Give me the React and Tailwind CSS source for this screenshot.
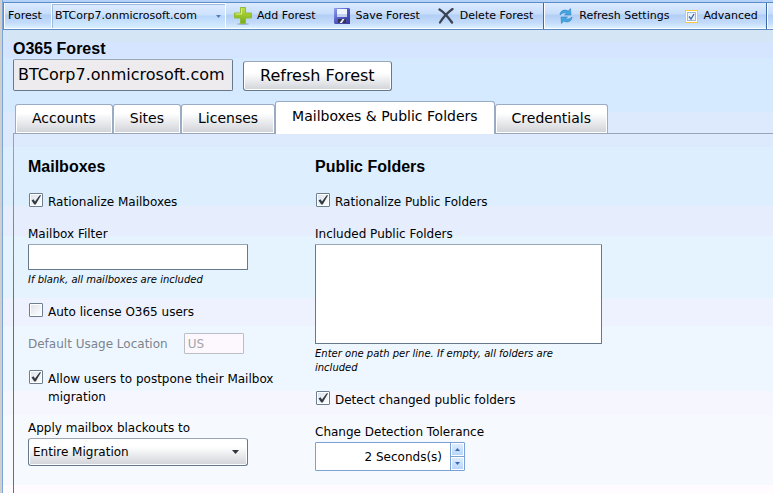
import React, { useState } from "react";

const AddIcon = () => (
  <svg width="18" height="18" viewBox="0 0 18 18">
    <defs>
      <linearGradient id="addFill" x1="0" y1="0" x2="0" y2="1">
        <stop offset="0" stopColor="#c3e046" />
        <stop offset="1" stopColor="#74ac12" />
      </linearGradient>
    </defs>
    <ellipse cx="9" cy="17" rx="6" ry="1" fill="#7f9cc0" opacity="0.6" />
    <path
      d="M6.500 .5h5v5.500h6v5h-6v5.500h-5v-5.500h-6v-5h6z"
      fill="url(#addFill)"
      stroke="#8fba3c"
      strokeWidth="1"
      strokeLinejoin="round"
    />
    <path d="M7.500 1.500v5.500h-6" fill="none" stroke="#dcef8c" strokeWidth="1" />
  </svg>
);

const SaveIcon = () => (
  <svg width="16" height="16" viewBox="0 0 16 16">
    <defs>
      <linearGradient id="saveFill" x1="0" y1="0" x2="1" y2="1">
        <stop offset="0" stopColor="#93a4ea" />
        <stop offset="0.5" stopColor="#5058c4" />
        <stop offset="1" stopColor="#3a3a98" />
      </linearGradient>
    </defs>
    <path d="M0 0h15l1 1v15H1l-1-1z" fill="url(#saveFill)" />
    <path d="M3 1h10v8H3z" fill="#eef3fd" />
    <path d="M3 6h10v3H3z" fill="#c5d2ee" />
    <path d="M4 11h8v4H4z" fill="#33364a" />
    <path d="M8.500 11h2L8 15H5.500z" fill="#e8ebf5" />
  </svg>
);

const DeleteIcon = () => (
  <svg width="16" height="16" viewBox="0 0 16 16">
    <path d="M1.500 1.500C6 4 10 9 14 14.500" fill="none" stroke="#3b4452" strokeWidth="2.400" strokeLinecap="round" />
    <path d="M14.500 1C9 5 5 9.500 2 14.500" fill="none" stroke="#3b4452" strokeWidth="2.200" strokeLinecap="round" />
  </svg>
);

const RefreshIcon = () => (
  <svg width="14" height="16" viewBox="0 0 14 16">
    <path
      d="M1 7C1 3.500 4 1.500 7.500 2.300L9.300 3L11.500 .5L12 7H5.500L7.500 5C5 4.500 3 5 1 7Z"
      fill="#45a4e0"
      stroke="#2c86c4"
      strokeWidth="0.6"
    />
    <path
      d="M13 9C13 12.500 10 14.500 6.500 13.700L4.700 13L2.500 15.500L2 9H8.500L6.500 11C9 11.500 11 11 13 9Z"
      fill="#45a4e0"
      stroke="#2c86c4"
      strokeWidth="0.6"
    />
  </svg>
);

const Triangle = ({ up, className }) => (
  <svg width="7" height="4" viewBox="0 0 7 4" className={className} fill="currentColor">
    <path d={up ? "M0 4h7L3.500 0z" : "M0 0h7L3.500 4z"} />
  </svg>
);

const ToolbarButton = ({ icon, children, className }) => (
  <button type="button" className={`flex shrink-0 items-center whitespace-nowrap ${className}`}>
    {icon}
    {children}
  </button>
);

const CheckBox = ({ label, defaultChecked }) => (
  <label className="mt-4 flex items-start gap-[5px] leading-[18px]">
    <span className="relative ml-px flex shrink-0">
      <input
        type="checkbox"
        defaultChecked={defaultChecked}
        className="peer size-[14px] appearance-none rounded-[1px] border border-[#6c7f90] bg-linear-to-br from-[#dce2ea] to-white shadow-[inset_0_0_0_1px_#ffffff]"
      />
      <svg
        viewBox="0 0 14 14"
        className="pointer-events-none absolute inset-0 hidden size-[14px] peer-checked:block"
      >
        <path d="M2.500 7.500L4.500 6.300L6 8.500L10.500 2.500L12.200 2L6.700 11.500H5.300Z" fill="#333b42" />
      </svg>
    </span>
    <span>{label}</span>
  </label>
);

const tabs = ["Accounts", "Sites", "Licenses", "Mailboxes & Public Folders", "Credentials"];

const App = () => {
  const [activeTab, setActiveTab] = useState("Mailboxes & Public Folders");

  return (
    <div className="flex min-h-screen border-l-2 border-[#d0cfcc] font-['DejaVu_Sans',Verdana,sans-serif] text-[12px] text-black">
      <div className="flex min-w-0 flex-1 flex-col border-l border-[#7ba3dc] bg-[linear-gradient(to_bottom,#d4e6f5_42px,#d5e5ff_42px,#d5e5ff_58px,#d5eaff_58px,#d5eaff_112px,#dde9fc_112px,#dde9fc_147px,#ddeeff_147px,#ddeeff_206px,#e6edfd_206px,#e6edfd_236px,#e5f3ff_236px,#e5f3ff_298px,#edf2fe_298px,#edf2fe_326px,#eef7ff_326px,#eef7ff_391px,#f6f6fe_391px,#f6f6fe_415px,#f6faff_415px,#f6faff_485px,#fffbff_485px)]">
        <div className="flex h-[30px] items-stretch overflow-hidden border-t-2 border-b border-t-[#b4d2f8] border-b-[#5c8cc4] text-[11px]">
          <div className="flex flex-1 items-stretch border-t border-l border-[#5c8cc4] bg-[linear-gradient(to_bottom,#dcebff_0px,#c6ddfb_11px,#b2cef5_12px,#c4dcfb_20px,#dcf0ff_25px)] shadow-[inset_1px_-1px_0_#ffffff]">
            <label htmlFor="forest" className="flex w-[47px] shrink-0 items-center pl-1">
              Forest
            </label>
            <div className="relative flex w-[175px] shrink-0 items-stretch border border-white bg-[linear-gradient(to_bottom,#ddebff_0px,#cce2ff_11px,#b9d7fb_12px,#d9f0ff_25px)] shadow-[inset_1px_1px_0_#9dbce0]">
              <select id="forest" className="w-full appearance-none pl-[3px]">
                <option>BTCorp7.onmicrosoft.com</option>
              </select>
              <Triangle className="pointer-events-none absolute top-[11px] right-1 h-[3px] w-[5px] text-[#5080bc]" />
            </div>
            <ToolbarButton icon={<AddIcon />} className="ml-2 gap-[5px]">
              Add Forest
            </ToolbarButton>
            <ToolbarButton icon={<SaveIcon />} className="ml-[18px] gap-[6px]">
              Save Forest
            </ToolbarButton>
            <ToolbarButton icon={<DeleteIcon />} className="ml-[18px] gap-[6px]">
              Delete Forest
            </ToolbarButton>
            <div className="ml-[10px] w-[2px] shrink-0 border-r border-l border-r-white border-l-[#3a6aa8]" />
            <ToolbarButton icon={<RefreshIcon />} className="ml-[14px] gap-[6px]">
              Refresh Settings
            </ToolbarButton>
            <label className="ml-4 flex shrink-0 items-center gap-[5px]">
              <span className="relative flex border border-[#ffc83c] bg-white p-px">
                <input
                  type="checkbox"
                  defaultChecked
                  className="peer size-[9px] appearance-none border border-[#9cb8dc] bg-[#e8f0fa]"
                />
                <svg
                  viewBox="0 0 9 9"
                  className="pointer-events-none absolute inset-px hidden size-[9px] peer-checked:block"
                >
                  <path d="M2 4.500L4 7L7 2" fill="none" stroke="#3c68a8" strokeWidth="1.300" />
                </svg>
              </span>
              Advanced
            </label>
            <div className="ml-2 w-[2px] shrink-0 border-r border-l border-r-white border-l-[#3a6aa8]" />
          </div>
        </div>

        <div className="flex flex-1 flex-col pl-[10px]">
          <h1 className="mt-[9px] font-['Liberation_Sans',Arial,sans-serif] text-[16px] leading-5 font-bold">
            O365 Forest
          </h1>
          <div className="flex items-end gap-[10px] text-[16px]">
            <input
              readOnly
              aria-label="Forest name"
              value="BTCorp7.onmicrosoft.com"
              className="h-8 w-[220px] rounded-[2px] border border-[#66788c] border-t-[#98a6b6] bg-[#eeebee] px-1 pb-[2px]"
            />
            <button
              type="button"
              className="h-[30px] rounded-[3px] border border-[#66788c] border-t-[#98a6b6] bg-linear-to-b from-white from-40% to-[#d0d3d8] px-4 leading-5 shadow-[inset_0_0_0_1px_#ffffff]"
            >
              Refresh Forest
            </button>
          </div>

          <div role="tablist" className="mt-[10px] flex items-end border-b border-[#9aa6b8] pl-[2px] text-[14px]">
            {tabs.map((tab) => (
              <button
                key={tab}
                type="button"
                role="tab"
                aria-selected={tab === activeTab}
                onClick={() => setActiveTab(tab)}
                className={`rounded-t-[3px] border border-b-0 border-[#9aacc4] px-4 whitespace-nowrap ${
                  tab === activeTab
                    ? "-mb-px h-[33px] bg-white pb-1"
                    : "h-[29px] bg-linear-to-b from-white from-30% to-[#cfd2d8] pb-[2px] shadow-[inset_0_0_0_1px_#ffffff]"
                }`}
              >
                {tab}
              </button>
            ))}
          </div>

          <div className="flex-1 bg-[linear-gradient(to_bottom,#9aa6b8,#5f7080_50%)] pl-px">
            <div className="h-full bg-[linear-gradient(to_bottom,#dde9fc_13px,#ddeeff_13px,#ddeeff_72px,#e6edfd_72px,#e6edfd_102px,#e5f3ff_102px,#e5f3ff_164px,#edf2fe_164px,#edf2fe_192px,#eef7ff_192px,#eef7ff_257px,#f6f6fe_257px,#f6f6fe_281px,#f6faff_281px,#f6faff_351px,#fffbff_351px)]">
              <div className="flex flex-wrap gap-x-10 pt-[23px] pl-[14px]">
                <section className="flex w-[247px] flex-col">
                  <h2 className="font-['Liberation_Sans',Arial,sans-serif] text-[16px] leading-5 font-bold">
                    Mailboxes
                  </h2>
                  <CheckBox label="Rationalize Mailboxes" defaultChecked />
                  <label htmlFor="filter" className="mt-[13px] leading-5">
                    Mailbox Filter
                  </label>
                  <input
                    id="filter"
                    type="text"
                    className="h-[26px] w-[220px] rounded-[1px] border border-[#66788c] border-t-[#98a6b6] bg-white px-1"
                  />
                  <p className="pt-[3px] text-[10px] leading-[14px] italic">
                    If blank, all mailboxes are included
                  </p>
                  <CheckBox label="Auto license O365 users" />
                  <div className="mt-3 flex items-center gap-4 text-[#7c848c]">
                    <label htmlFor="location">Default Usage Location</label>
                    <input
                      id="location"
                      disabled
                      defaultValue="US"
                      className="h-[21px] w-[60px] rounded-[1px] border border-[#bcbec6] bg-[#fcf8fe] px-[3px] text-[#a4a4aa]"
                    />
                  </div>
                  <CheckBox label="Allow users to postpone their Mailbox migration" defaultChecked />
                  <label htmlFor="blackouts" className="mt-3 leading-5">
                    Apply mailbox blackouts to
                  </label>
                  <div className="relative w-[220px]">
                    <select
                      id="blackouts"
                      className="block h-7 w-full appearance-none rounded-[3px] border border-[#66788c] border-t-[#98a6b6] bg-linear-to-b from-white from-30% to-[#d0d3d8] px-1 shadow-[inset_0_0_0_1px_#ffffff]"
                    >
                      <option>Entire Migration</option>
                    </select>
                    <Triangle className="pointer-events-none absolute top-3 right-[9px] text-[#30353a]" />
                  </div>
                </section>

                <section className="flex w-[287px] flex-col">
                  <h2 className="font-['Liberation_Sans',Arial,sans-serif] text-[16px] leading-5 font-bold">
                    Public Folders
                  </h2>
                  <CheckBox label="Rationalize Public Folders" defaultChecked />
                  <label htmlFor="folders" className="mt-[13px] leading-5">
                    Included Public Folders
                  </label>
                  <textarea
                    id="folders"
                    className="h-[100px] resize-none rounded-[1px] border border-[#66788c] border-t-[#98a6b6] bg-white px-1"
                  />
                  <p className="pt-[3px] pr-6 text-[10px] leading-[14px] italic">
                    Enter one path per line. If empty, all folders are included
                  </p>
                  <CheckBox label="Detect changed public folders" defaultChecked />
                  <label htmlFor="tolerance" className="mt-[13px] leading-5">
                    Change Detection Tolerance
                  </label>
                  <div className="flex h-[29px] w-[150px] rounded-[1px] border border-[#7ba0d8] bg-white">
                    <input
                      id="tolerance"
                      defaultValue="2 Seconds(s)"
                      className="min-w-0 flex-1 pr-2 text-right"
                    />
                    <div className="flex w-[14px] flex-col divide-y divide-[#7ba0d8] border-l border-[#7ba0d8] text-[#3a68ac]">
                      <button
                        type="button"
                        aria-label="Increase"
                        className="flex flex-1 items-center justify-center bg-linear-to-b from-[#e0eeff] to-[#b4d4fa] shadow-[inset_0_0_0_1px_#ffffff]"
                      >
                        <Triangle up className="h-[3px] w-[5px]" />
                      </button>
                      <button
                        type="button"
                        aria-label="Decrease"
                        className="flex flex-1 items-center justify-center bg-linear-to-b from-[#e0eeff] to-[#b4d4fa] shadow-[inset_0_0_0_1px_#ffffff]"
                      >
                        <Triangle className="h-[3px] w-[5px]" />
                      </button>
                    </div>
                  </div>
                </section>
              </div>
            </div>
          </div>
        </div>
      </div>
    </div>
  );
};

export default App;
